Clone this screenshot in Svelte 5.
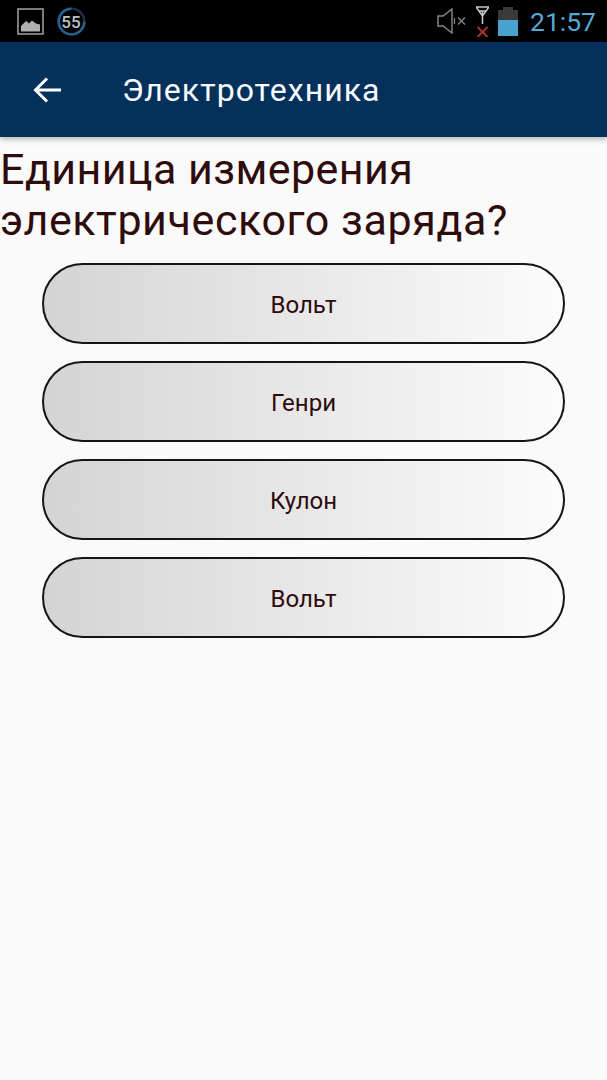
<script>
  const answers = ['Вольт', 'Генри', 'Кулон', 'Вольт'];
</script>

<div class="screen">
  <div class="status">
    <div class="status-left">
      <svg class="pic" width="27" height="27" viewBox="0 0 27 27">
        <rect x="1" y="1" width="25" height="25" fill="none" stroke="#9a9a9a" stroke-width="1.6" />
        <path d="M4 23.500 V18 L9 13 L12 15.500 L15 12.500 L19 15.500 L23 16.500 V23.500 Z" fill="#b0b0b0" />
      </svg>
      <svg class="counter" width="29" height="29" viewBox="0 0 29 29">
        <circle cx="14.500" cy="14.500" r="12.800" fill="none" stroke="#1a3145" stroke-width="2.600" />
        <path d="M14.500 1.700 A12.800 12.800 0 1 0 27.300 14.500" fill="none" stroke="#25618f" stroke-width="2.600" />
        <text x="14" y="20.500" text-anchor="middle" class="counter-text">55</text>
      </svg>
    </div>
    <div class="status-right">
      <svg class="speaker" width="29" height="26" viewBox="0 0 29 26">
        <path d="M1 8 H6 L15 1 V25 L6 18 H1 Z" fill="none" stroke="#8a8a8a" stroke-width="1.400" />
        <path d="M17.500 10 V16" stroke="#8a8a8a" stroke-width="1.200" />
        <path d="M21 9.500 L28 16.500 M28 9.500 L21 16.500" stroke="#8a8a8a" stroke-width="1.200" />
      </svg>
      <svg class="signal" width="13" height="31" viewBox="0 0 13 31">
        <path d="M0 1 H13 M3 5 H10 M0 1 L6.500 10 L13 1 M6.500 5 V18" fill="none" stroke="#c8c8c8" stroke-width="1.500" />
        <path d="M1.500 21 L11.500 31 M11.500 21 L1.500 31" stroke="#a83228" stroke-width="2" />
      </svg>
      <div class="battery">
        <div class="battery-cap"></div>
        <div class="battery-body"><div class="battery-fill"></div></div>
      </div>
      <span class="clock">21:57</span>
    </div>
  </div>

  <header class="toolbar">
    <svg class="back" width="30" height="28" viewBox="0 0 30 28">
      <path d="M2.500 14 H28 M14 2.500 L2.500 14 L14 25.500" fill="none" stroke="#fff" stroke-width="3" />
    </svg>
    <h1>Электротехника</h1>
  </header>

  <main>
    <h2>Единица измерения <span class="line-two">электрического заряда?</span></h2>
    <div class="answers">
      {#each answers as answer}
        <button>{answer}</button>
      {/each}
    </div>
  </main>
</div>

<style>
  :global(body) {
    margin: 0;
  }
  .screen {
    width: 607px;
    height: 1080px;
    background: #fafafa;
    font-family: Roboto, sans-serif;
    overflow: hidden;
  }
  .status {
    height: 42px;
    background: #000;
    display: flex;
    justify-content: space-between;
    align-items: center;
    padding: 0 11px 0 17px;
    box-sizing: border-box;
  }
  .status-left,
  .status-right {
    display: flex;
    align-items: center;
  }
  .status-left {
    gap: 13px;
  }
  .status-right {
    gap: 10px;
  }
  .counter-text {
    font: 500 17px Roboto, sans-serif;
    fill: #b9c2c9;
  }
  .signal {
    margin-right: -1px;
    margin-top: 1px;
  }
  .battery {
    width: 20px;
    display: flex;
    flex-direction: column;
    align-items: center;
  }
  .battery-cap {
    width: 10px;
    height: 3px;
    background: #3a3a3a;
  }
  .battery-body {
    width: 20px;
    height: 26px;
    background: #3a3a3a;
    display: flex;
    align-items: flex-end;
  }
  .battery-fill {
    width: 100%;
    height: 16px;
    background: #4aa3cf;
  }
  .clock {
    font-size: 26.5px;
    color: #55a9d6;
    margin-left: 2px;
  }
  .toolbar {
    height: 95px;
    background: #03315c;
    box-shadow: 0 2px 6px rgba(0, 0, 0, 0.3);
    display: flex;
    align-items: center;
    padding-left: 33px;
    box-sizing: border-box;
    position: relative;
  }
  .back {
    margin-right: 59px;
  }
  h1 {
    margin: 0;
    font-size: 32px;
    font-weight: 400;
    color: #f8fafc;
    letter-spacing: 1.05px;
  }
  h2 {
    margin: 0;
    padding-top: 7px;
    font-size: 43px;
    line-height: 51px;
    font-weight: 400;
    color: #2e0c0c;
    letter-spacing: 0.44px;
  }
  .line-two {
    display: block;
    letter-spacing: 0.59px;
  }
  .answers {
    display: flex;
    flex-direction: column;
    gap: 17px;
    padding: 17px 42px 0;
  }
  button {
    height: 81px;
    border: 2px solid #151515;
    border-radius: 41px;
    background: linear-gradient(to right, #d4d4d4, #fcfcfc);
    font-family: Roboto, sans-serif;
    font-size: 24px;
    color: #2e0c0c;
    padding: 2px 0 0;
  }
</style>
